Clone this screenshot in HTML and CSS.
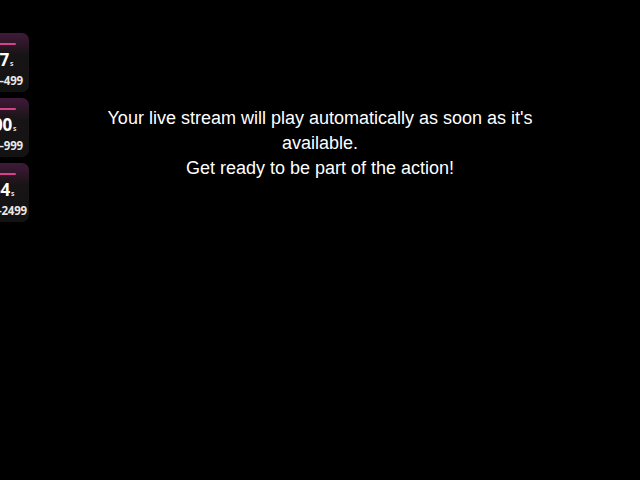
FILE: index.html
```html
<!DOCTYPE html>
<html>
<head>
<meta charset="utf-8">
<link rel="stylesheet" href="styles.css">
</head>
<body>
<div class="stage">
  <div class="rail">
    <div class="card">
      <div class="bar"></div>
      <div class="big">1.7<span class="unit">s</span></div>
      <div class="range">250–499</div>
    </div>
    <div class="card">
      <div class="bar"></div>
      <div class="big tight">3.00<span class="unit">s</span></div>
      <div class="range">500–999</div>
    </div>
    <div class="card">
      <div class="bar"></div>
      <div class="big mid">5.54<span class="unit">s</span></div>
      <div class="range wide">1000–2499</div>
    </div>
  </div>
  <div class="message">
    <p>Your live stream will play automatically as soon as it's available.</p>
    <p>Get ready to be part of the action!</p>
  </div>
</div>
</body>
</html>
```
FILE: styles.css
```css
html, body {
  margin: 0;
  padding: 0;
  background: #000;
  height: 100%;
}
.stage {
  position: relative;
  width: 640px;
  height: 480px;
  overflow: hidden;
  background: #000;
  font-family: "Liberation Sans", Arial, sans-serif;
}
.rail {
  position: absolute;
  left: -60px;
  top: 33px;
  display: flex;
  flex-direction: column;
  gap: 6px;
}
.card {
  width: 89px;
  height: 59px;
  box-sizing: border-box;
  border-radius: 7px;
  background: linear-gradient(to bottom, #40193a 0px, #2a1724 12px, #171416 22px, #131313 100%);
  padding: 10px 6px 0 0;
  text-align: right;
  font-family: "Open Sans", "Liberation Sans", sans-serif;
  color: #fff;
}
.bar {
  height: 2px;
  width: 60px;
  margin-left: 16px;
  background: #d8408a;
  border-radius: 1px;
}
.big {
  margin-top: 5px;
  padding-right: 10px;
  font-size: 17px;
  font-weight: 700;
  line-height: 19px;
  letter-spacing: -0.3px;
}
.big.tight {
  padding-right: 7px;
}
.big.mid {
  padding-right: 9px;
}
.unit {
  font-size: 7px;
  font-weight: 600;
  margin-left: 1px;
}
.range {
  margin-top: 1px;
  font-size: 11.5px;
  font-weight: 700;
  line-height: 13px;
  color: #e8e8e8;
  letter-spacing: -0.2px;
}
.range.wide {
  margin-right: -4px;
}
.message {
  width: 440px;
  margin: 0 auto;
  padding-top: 106px;
  text-align: center;
  color: #fff;
  font-size: 18px;
  line-height: 25px;
}
.message p {
  margin: 0;
}
```
